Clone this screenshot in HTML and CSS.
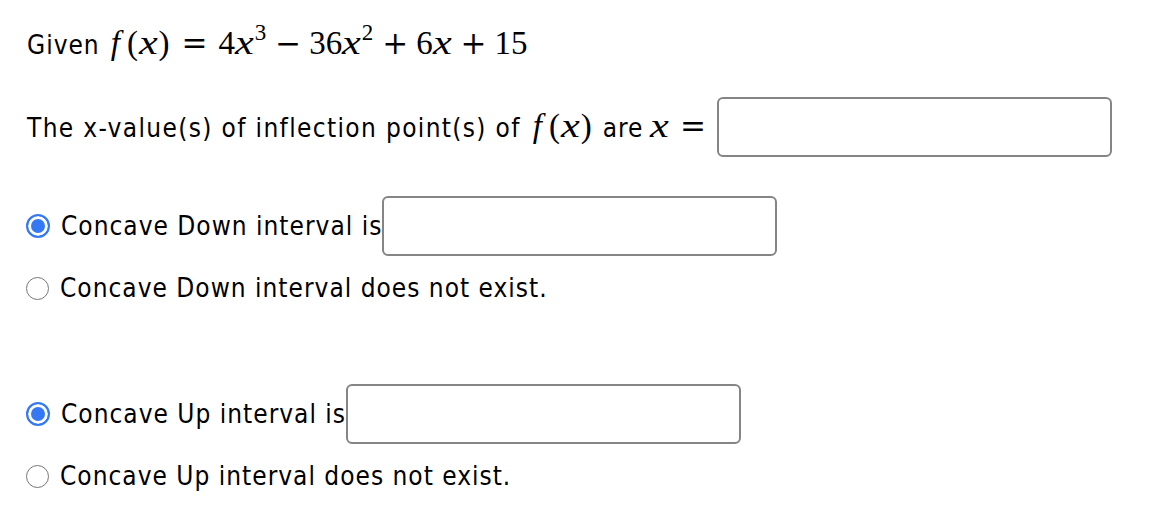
FILE: index.html
```html
<!DOCTYPE html>
<html>
<head>
<meta charset="utf-8">
<link rel="stylesheet" href="styles.css">
</head>
<body>
<div class="page">
  <div class="row r1">
    <span class="line"><span class="txt">Given</span><span class="math m-given"><span class="mi f">f</span><span class="mp">(</span><span class="mi x">x</span><span class="mp">)</span><span class="rel">=</span><span class="mn">4</span><span class="mi x">x</span><sup class="sup">3</sup><span class="bin">−</span><span class="mn">36</span><span class="mi x">x</span><sup class="sup">2</sup><span class="bin">+</span><span class="mn">6</span><span class="mi x">x</span><span class="bin">+</span><span class="mn">15</span></span></span>
  </div>
  <div class="row r2">
    <span class="line"><span class="txt wide">The x-value(s) of inflection point(s) of</span><span class="math m-fx"><span class="mi f">f</span><span class="mp">(</span><span class="mi x">x</span><span class="mp">)</span></span><span class="txt">are</span><span class="math m-xeq"><span class="mi x">x</span><span class="rel">=</span></span></span>
    <span class="box"></span>
  </div>
  <div class="row r3">
    <span class="radio on"></span>
    <span class="txt">Concave Down interval is</span><span class="box"></span>
  </div>
  <div class="row r4">
    <span class="radio"></span>
    <span class="txt">Concave Down interval does not exist.</span>
  </div>
  <div class="row r5">
    <span class="radio on"></span>
    <span class="txt">Concave Up interval is</span><span class="box"></span>
  </div>
  <div class="row r6">
    <span class="radio"></span>
    <span class="txt">Concave Up interval does not exist.</span>
  </div>
</div>
</body>
</html>
```

FILE: styles.css
```css
html, body {
  margin: 0;
  padding: 0;
  background: #ffffff;
}
.page {
  padding: 14px 0 0 26px;
  font-family: "DejaVu Sans Condensed", "DejaVu Sans", sans-serif;
  font-size: 26px;
  letter-spacing: 1px;
  color: #000;
}
.row {
  display: flex;
  align-items: center;
  white-space: nowrap;
}
.line {
  display: inline-block;
  line-height: 40px;
}
.txt.wide { letter-spacing: 1.35px; }
.r1 { height: 60px; padding-left: 1px; }
.r2 { height: 60px; margin-top: 23px; padding-left: 1px; }
.r3 { height: 60px; margin-top: 39px; }
.r4 { height: 40px; margin-top: 12px; }
.r5 { height: 60px; margin-top: 76px; }
.r6 { height: 40px; margin-top: 12px; }

.math {
  font-family: "Liberation Serif", serif;
  font-size: 33px;
  letter-spacing: 0;
}
.mi {
  font-style: italic;
}
.mi.f {
  margin: 0 6px 0 2px;
}
.mi.x {
  display: inline-block;
  transform: scaleX(1.28);
  transform-origin: left center;
  margin-right: 4px;
}
.mp { margin: 0 1px; }
.rel, .bin {
  font-family: "DejaVu Serif", serif;
  font-size: 31px;
}
.rel { margin: 0 11px 0 11px; }
.bin { margin: 0 8px 0 9px; }
.sup {
  font-size: 23px;
  vertical-align: 0;
  position: relative;
  top: -14px;
  margin-left: 1px;
  line-height: 0;
}
.m-given { margin-left: 9px; }
.m-fx { margin: 0 10px 0 10px; }
.m-xeq { margin-left: 7px; }
.m-xeq .rel { margin-right: 11px; }

.box {
  display: inline-block;
  width: 391px;
  height: 56px;
  border: 2px solid #858585;
  border-radius: 6px;
  background: #fff;
  flex: none;
}
.radio {
  width: 21px;
  height: 21px;
  border: 1.5px solid #767676;
  border-radius: 50%;
  margin-right: 11px;
  box-sizing: content-box;
  flex: none;
}
.radio.on {
  border: 2.5px solid #3478f6;
  width: 20px;
  height: 20px;
  background: #3478f6;
  box-shadow: inset 0 0 0 3px #fff;
}
```
